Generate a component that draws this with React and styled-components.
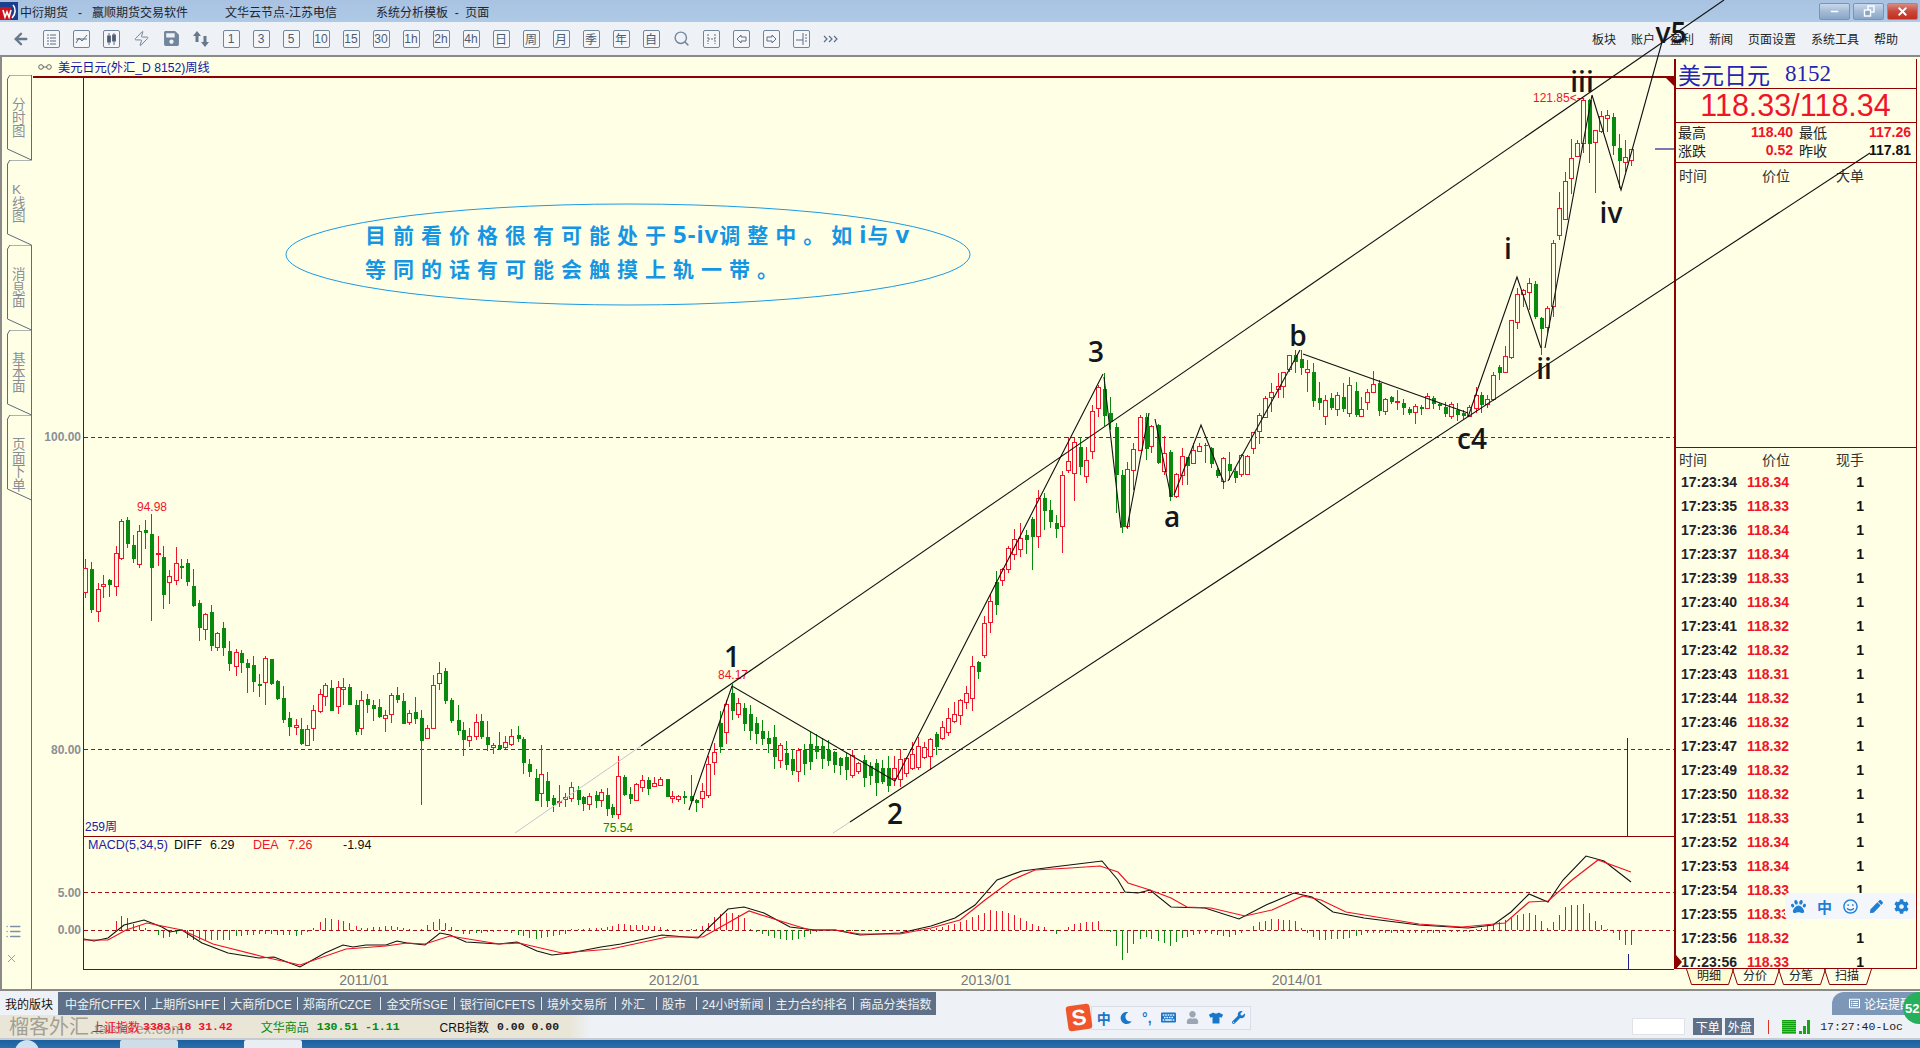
import React from "react";
import styled, { createGlobalStyle } from "styled-components";
import { ArrowLeft, Zap, Search, List, X, Minus } from "lucide-react";
import { FaPaw, FaRegSmile, FaPen, FaCog, FaMoon, FaKeyboard, FaUser, FaTshirt, FaWrench, FaSave, FaRegListAlt } from "react-icons/fa";

const CN = `"Liberation Sans", "Noto Sans CJK SC", sans-serif`;
const PAPER = "#ffffe6";
const FRAME = "#8f0000";
const RED = "#f0142a";
const GREEN = "#078a0e";
const SLATE = "#5f7188";

const GlobalStyle = createGlobalStyle`
  html, body { margin: 0; padding: 0; background: #eef1f5; }
  body { font-family: ${CN}; overflow: hidden; }
`;

const Page = styled.div`
  position: relative;
  display: flex;
  flex-direction: column;
  width: 1920px;
  height: 1048px;
  overflow: hidden;
  font-size: 12px;
  color: #222;
`;

/* ---------- title bar ---------- */
const TitleBar = styled.div`
  display: flex;
  align-items: center;
  height: 22px;
  background: linear-gradient(#a9c2e2, #aecae6);
`;
const TitleText = styled.span`
  margin-left: ${(p) => p.$gap}px;
  white-space: pre;
  font-size: 12px;
  color: #1e2530;
`;
const WindowButtons = styled.div`
  display: flex;
  gap: 3px;
  margin-left: auto;
  margin-right: 2px;
`;
const WindowButton = styled.div`
  display: flex;
  align-items: center;
  justify-content: center;
  width: 31px;
  height: 17px;
  border: 1px solid #7f93ab;
  border-radius: 2px;
  box-sizing: border-box;
  color: #fff;
  background: ${(p) => (p.$close ? "linear-gradient(#d98a80 0%, #c9483a 50%, #c42e1e 100%)" : "linear-gradient(#c8d8ea 0%, #a4bbd6 50%, #8aa6c6 100%)")};
`;

/* ---------- toolbar ---------- */
const Toolbar = styled.div`
  display: flex;
  align-items: center;
  height: 33px;
  padding-left: 6px;
  background: #eef1f5;
`;
const ToolCell = styled.div`
  display: flex;
  align-items: center;
  justify-content: center;
  width: 30px;
  color: #71859b;
`;
const ToolBox = styled.div`
  display: flex;
  align-items: center;
  justify-content: center;
  width: 17px;
  height: 18px;
  box-sizing: border-box;
  border: 1px solid #71859b;
  border-radius: 2px;
  background: #f4f6f9;
  font-size: ${(p) => (p.$small ? 11 : 12)}px;
  color: #4d5d6f;
`;
const Menu = styled.div`
  display: flex;
  gap: 15px;
  margin-left: auto;
  margin-right: 22px;
  font-size: 12px;
  color: #222;
`;
const Rule = styled.div`
  height: 2px;
  background: #8a8a8a;
`;

/* ---------- main area ---------- */
const Main = styled.div`
  display: flex;
  height: 932px;
  background: ${PAPER};
`;
const LeftRail = styled.div`
  position: relative;
  display: flex;
  flex-direction: column;
  box-sizing: border-box;
  width: 33px;
  padding-top: 18px;
  border-left: 2px solid #8a8a8a;
`;
const RailEdge = styled.div`
  flex: 1;
  margin-left: 29px;
  border-left: 1px solid #5d6b7a;
`;
const RailIcons = styled.div`
  position: absolute;
  left: 3px;
  top: 866px;
  display: flex;
  flex-direction: column;
  gap: 12px;
  color: #7d90a6;
`;
const SideTab = styled.div`
  position: relative;
  height: 85px;
  width: 31px;
`;
const SideTabShape = styled.svg`
  position: absolute;
  left: 0;
  top: 0;
`;
const SideTabText = styled.div`
  position: absolute;
  left: 10px;
  top: 23px;
  width: 14px;
  font-size: 13.5px;
  line-height: 13.5px;
  color: #8a8f96;
  word-break: break-all;
`;
const ChartColumn = styled.div`
  display: flex;
  flex-direction: column;
  width: 1641px;
`;
const ChartTitle = styled.div`
  display: flex;
  align-items: center;
  gap: 6px;
  height: 19px;
  padding-left: 5px;
  font-size: 12.2px;
  color: #1616a6;
`;
const ChartSvg = styled.svg`
  display: block;
`;
const AxisLabel = styled.text`
  font: bold 12px ${CN};
  fill: #8a8f96;
  text-anchor: end;
`;
const DateLabel = styled.text`
  font: 14px ${CN};
  fill: #77797d;
  text-anchor: middle;
`;
const PriceNote = styled.text`
  font: 12px ${CN};
  fill: ${(p) => p.$color};
`;
const IndicatorText = styled.text`
  font: 12.5px ${CN};
  fill: ${(p) => p.$color};
`;

/* ---------- quote panel ---------- */
const Panel = styled.div`
  position: relative;
  display: flex;
  flex-direction: column;
  width: 243px;
  padding-top: 2px;
`;
const PanelBox = styled.div`
  display: flex;
  flex-direction: column;
  height: 910px;
  box-sizing: border-box;
  border-left: 2px solid ${FRAME};
  border-right: 1px solid ${FRAME};
  border-bottom: 1px solid ${FRAME};
  overflow: hidden;
`;
const NameRow = styled.div`
  display: flex;
  align-items: center;
  height: 30px;
  flex: none;
  padding-left: 2px;
  box-sizing: border-box;
  border-bottom: 1px solid ${FRAME};
  color: #2424b4;
  font-size: 23px;
`;
const NameCode = styled.span`
  margin-left: 15px;
  font-family: "Liberation Serif", serif;
  font-size: 23px;
`;
const PriceRow = styled.div`
  display: flex;
  align-items: center;
  justify-content: center;
  height: 34px;
  flex: none;
  box-sizing: border-box;
  border-bottom: 1px solid ${FRAME};
  color: ${RED};
  font-size: 30.5px;
  padding-right: 1px;
`;
const StatsGrid = styled.div`
  display: grid;
  grid-template-columns: 115px 112px;
  column-gap: 6px;
  align-content: center;
  height: 40px;
  flex: none;
  padding: 0 0 3px 2px;
  box-sizing: border-box;
  border-bottom: 1px solid ${FRAME};
`;
const Stat = styled.div`
  display: flex;
  justify-content: space-between;
  align-items: center;
  height: 18px;
  font-size: 14px;
`;
const StatValue = styled.b`
  color: ${(p) => (p.$black ? "#111" : RED)};
  font-size: 14px;
`;
const OrderSection = styled.div`
  height: 285px;
  flex: none;
  box-sizing: border-box;
  border-bottom: 1px solid ${FRAME};
`;
const ColumnHead = styled.div`
  display: grid;
  grid-template-columns: 83px 74px 60px;
  flex: none;
  height: ${(p) => p.$h}px;
  align-items: center;
  padding-left: 3px;
  font-size: 14px;
  color: #333;
`;
const TradeRow = styled.div`
  display: grid;
  grid-template-columns: 66px 68px 49px;
  align-items: center;
  flex: none;
  height: 24px;
  padding-left: 5px;
  font-size: 14px;
  line-height: 14px;
  font-weight: bold;
  color: #22232a;
`;
const TradePrice = styled.span`
  color: ${RED};
`;
const TradeQty = styled.span`
  text-align: right;
  color: #111;
`;
const PanelMarker = styled.div`
  position: absolute;
  left: 2px;
  top: 898px;
  width: 0;
  height: 0;
  border-top: 7px solid transparent;
  border-bottom: 7px solid transparent;
  border-left: 6px solid ${FRAME};
`;
const PanelTabs = styled.div`
  display: flex;
  padding-left: 12px;
`;
const PanelTab = styled.div`
  position: relative;
  width: 46px;
  height: 16px;
  text-align: center;
  font-size: 12px;
  line-height: 15px;
  color: #222;
`;
const PanelTabShape = styled.svg`
  position: absolute;
  left: 0;
  top: 0;
`;
const PanelTabText = styled.span`
  position: relative;
`;

/* ---------- bottom bars ---------- */
const TabBar = styled.div`
  display: flex;
  margin-top: 1px;
  height: 23px;
  background: #eef1f5;
`;
const MyBlocks = styled.div`
  display: flex;
  align-items: center;
  width: 58px;
  padding-left: 5px;
  box-sizing: border-box;
  font-size: 12px;
  color: #111;
`;
const BlockTabs = styled.div`
  display: flex;
  align-items: center;
  width: 878px;
  padding-left: 7px;
  box-sizing: border-box;
  background: ${SLATE};
  color: #edf1f5;
  font-size: 12px;
  white-space: nowrap;
`;
const BlockSep = styled.span`
  width: 1px;
  height: 13px;
  margin: 0 5px 0 ${(p) => 5 + p.$extra}px;
  background: #e6ebf1;
`;
const StatusBar = styled.div`
  position: relative;
  display: flex;
  align-items: center;
  height: 23px;
  background: linear-gradient(90deg, #e9e6d8 0, #e9e6d8 570px, #eef1f5 590px);
  font-size: 12px;
  border-bottom: 2px solid #c8ccd0;
  box-sizing: content-box;
`;
const Ticker = styled.span`
  position: relative;
  margin-left: ${(p) => p.$gap}px;
  color: ${(p) => p.$color};
  font-family: "Liberation Mono", "Noto Sans CJK SC", monospace;
  font-size: 11.5px;
  font-weight: ${(p) => (p.$bold ? "bold" : "normal")};
  white-space: pre;
`;
const TickerName = styled.span`
  position: relative;
  margin-left: ${(p) => p.$gap}px;
  color: ${(p) => p.$color};
  font-size: 12px;
`;
const Watermark = styled.div`
  position: absolute;
  left: 9px;
  top: -1px;
  color: #6a665c;
  opacity: 0.55;
  font-size: 20px;
  line-height: 26px;
  white-space: nowrap;
`;
const WatermarkSmall = styled.span`
  font-size: 15px;
`;
const StatusRight = styled.div`
  display: flex;
  align-items: center;
  margin-left: auto;
  padding-right: 17px;
`;
const QtyInput = styled.div`
  width: 53px;
  height: 17px;
  background: #fff;
  border: 1px solid #dfe3e8;
  box-sizing: border-box;
`;
const OrderButton = styled.div`
  display: flex;
  align-items: center;
  justify-content: center;
  width: 29px;
  height: 17px;
  margin-left: ${(p) => p.$gap}px;
  background: ${SLATE};
  color: #fff;
  font-size: 12px;
`;
const RedTick = styled.span`
  width: 1px;
  height: 14px;
  margin-left: 14px;
  background: #e03020;
`;
const LevelBlock = styled.span`
  width: 14px;
  height: 14px;
  margin-left: 13px;
  background: repeating-linear-gradient(#10a010 0 1px, #30e030 1px 2px);
`;
const SignalBars = styled.span`
  display: flex;
  align-items: flex-end;
  gap: 1px;
  height: 14px;
  margin-left: 3px;
`;
const SignalBar = styled.i`
  width: 3px;
  height: ${(p) => p.$h}px;
  background: #17a517;
`;
const Clock = styled.span`
  margin-left: 10px;
  font-family: "Liberation Mono", monospace;
  font-size: 11.5px;
  white-space: nowrap;
`;
const Taskbar = styled.div`
  display: flex;
  height: 8px;
  background: linear-gradient(#1c5f9c, #2a6fae);
  overflow: hidden;
`;
const TaskOrb = styled.span`
  width: 24px;
  height: 24px;
  margin-left: 15px;
  border-radius: 50%;
  background: #cfe0ee;
`;
const TaskTile = styled.span`
  width: ${(p) => p.$w}px;
  height: 10px;
  margin-left: ${(p) => p.$gap}px;
  border-radius: 2px 2px 0 0;
  background: ${(p) => p.$bg};
`;

/* ---------- floating things ---------- */
const Overlay = styled.svg`
  position: absolute;
  left: 0;
  top: 0;
  z-index: 5;
  pointer-events: none;
`;
const WaveLabel = styled.text`
  font: 600 28px "Open Sans", sans-serif;
  fill: #14161c;
  text-anchor: middle;
`;
const NoteText = styled.text`
  font: bold 21px "Noto Sans CJK SC", sans-serif;
  letter-spacing: 7px;
  fill: #1596e2;
`;
const NoteLatin = styled.tspan`
  font: bold 24px "Noto Sans", sans-serif;
  letter-spacing: 1px;
`;
const InputWidget = styled.div`
  position: absolute;
  left: 1785px;
  top: 893px;
  z-index: 6;
  display: flex;
  align-items: center;
  justify-content: space-around;
  width: 130px;
  height: 26px;
  border-radius: 3px;
  background: #f3f6fb;
  color: #1f7fd4;
  font-size: 15px;
  font-weight: bold;
`;
const SogouBar = styled.div`
  position: absolute;
  left: 1067px;
  top: 1005px;
  z-index: 6;
  display: flex;
  align-items: center;
`;
const SogouLogo = styled.div`
  display: flex;
  align-items: center;
  justify-content: center;
  width: 24px;
  height: 25px;
  border-radius: 3px;
  background: #f0562a;
  color: #fff;
  font: bold 22px ${CN};
  transform: rotate(-8deg);
`;
const SogouItems = styled.div`
  display: flex;
  align-items: center;
  justify-content: space-around;
  width: 158px;
  height: 22px;
  background: #f0f4fa;
  border: 1px solid #d8dfe8;
  color: #1a76c8;
  font-size: 14px;
  font-weight: bold;
`;
const ForumTab = styled.div`
  position: absolute;
  left: 1832px;
  top: 992px;
  z-index: 4;
  display: flex;
  align-items: center;
  gap: 4px;
  width: 88px;
  height: 23px;
  padding-left: 17px;
  box-sizing: border-box;
  color: #fff;
  font-size: 12px;
  white-space: nowrap;
  overflow: hidden;
  background: #7d97b8;
  border-radius: 12px 0 0 0;
`;
const OnlineBadge = styled.div`
  position: absolute;
  left: 1903px;
  top: 992px;
  z-index: 6;
  width: 32px;
  height: 32px;
  border-radius: 50%;
  background: #27b05c;
  color: #fff;
  font-size: 13px;
  font-weight: bold;
  line-height: 34px;
  padding-left: 2px;
  box-sizing: border-box;
`;

/* ---------- chart data ---------- */
const rowsA = [
  [62,1,178,205,278,294],[77,0,186,207,330,338],[92,1,250,268,335,365],[106,1,225,252,258,295],[121,0,238,240,255,290],[136,1,138,160,260,288],[150,1,58,63,176,180],[165,0,52,60,132,145],[180,0,104,135,178,190],[194,1,76,94,192,204],
  [209,0,60,90,98,146],[224,0,42,102,204,362],[239,1,108,159,164,198],[253,0,138,171,284,326],[268,1,210,228,248,312],[283,1,142,190,240,255],[297,0,178,198,203,238],[312,0,178,189,246,258],[327,0,208,258,318,320],[341,0,300,309,384,422],
  [356,1,338,342,387,420],[371,0,316,336,438,452],[385,1,395,400,443,452],[400,0,366,384,444,468],[415,0,424,453,492,512],[430,1,448,457,500,527],[444,0,450,459,489,520],[459,0,478,488,504,578],[474,0,468,495,546,575],[488,0,522,552,557,590],
  [503,1,468,474,546,614],[518,0,476,477,552,556],[532,0,540,544,596,600],[547,0,558,594,660,668],[562,0,636,654,681,708],[577,1,658,676,682,706],[591,0,654,687,733,736],[606,1,674,687,736,738],[621,1,616,630,686,722],[636,1,568,582,634,638],
  [650,1,550,556,588,618],[665,0,540,565,632,634],[680,1,544,561,620,642],[694,1,534,562,567,616],[709,0,552,561,614,616],[724,0,600,615,695,705],[738,1,573,600,686,705],[753,0,582,598,615,640],[768,0,600,615,627,662],[782,0,598,622,652,655],
  [797,1,630,645,656,695],[812,1,578,586,644,668],[826,0,562,586,599,608],[841,0,578,603,671,672],[856,1,630,640,668,676],[870,0,590,636,658,672],[885,0,630,655,722,914],[900,1,674,684,714,718],[915,1,525,556,684,686],[929,1,486,520,551,570],
  [944,0,504,513,604,612],[959,0,595,601,662,668],[974,0,615,660,692,706],[988,0,666,690,720,768],[1003,1,684,709,722,741],[1018,1,642,666,710,720],[1032,0,642,662,712,716],[1047,0,664,712,736,752],[1062,1,728,736,741,762],[1076,0,696,735,748,750],
  [1091,1,708,726,743,748],[1106,1,688,709,734,738],[1121,0,678,705,718,726],[1135,0,712,718,788,822],[1150,0,778,792,816,830],[1165,0,808,834,902,903],[1179,1,735,823,880,920],[1194,0,815,844,902,920],[1209,0,885,895,916,935],[1223,1,855,904,906,922],
  [1238,1,878,893,897,920],[1253,1,846,862,896,905],[1268,0,858,870,900,914],[1282,0,888,890,912,932],[1297,1,878,888,914,930],[1312,0,874,885,902,924],[1326,1,868,878,902,920],[1341,0,864,886,926,948],[1353,0,912,921,945,953],[1368,1,768,828,944,956],
  [1383,0,826,832,885,888],[1397,0,862,882,897,911],[1412,1,848,852,900,903],[1427,1,826,842,861,875],[1441,0,832,841,866,885],[1456,1,830,850,858,862],[1471,1,830,838,855,858],[1486,0,838,838,890,892],[1500,1,874,888,896,908],[1515,1,884,888,898,907],
  [1530,0,872,889,893,912],[1545,0,826,888,902,905],[1559,0,898,900,908,936],
];
const rowsB = [
  [362,1,648,655,718,730],[378,1,598,628,672,690],[392,1,578,625,658,682],[407,0,600,615,630,672],[422,0,560,567,620,720],[437,1,480,505,620,655],[451,0,490,503,543,600],[466,0,510,540,575,595],[481,0,555,578,596,625],[495,1,422,436,590,668],
  [510,1,320,393,422,430],[525,1,320,336,430,512],[540,0,320,350,410,435],[554,1,350,392,440,458],[569,1,225,243,365,388],[584,1,165,172,234,262],[598,0,130,178,258,288],[613,0,200,248,275,300],[628,0,280,292,435,550],[641,0,420,435,590,610],
  [655,1,395,418,590,596],[670,1,340,358,420,480],[685,1,255,262,360,360],[700,0,248,262,358,390],[714,1,285,290,350,368],[729,0,282,286,400,402],[744,1,318,370,425,435],[759,0,360,367,500,514],[773,1,430,433,498,505],[788,1,355,380,437,465],
  [802,0,380,382,407,465],[817,1,340,362,400,402],[831,1,340,348,363,367],[846,0,338,344,346,400],[860,0,352,353,402,415],[875,0,415,420,437,445],[890,1,382,386,455,478],[905,0,365,403,424,450],[919,0,415,424,443,460],[934,1,372,375,432,440],
  [949,1,375,380,432,435],[964,1,305,308,355,372],[978,1,250,256,305,342],[993,1,198,206,262,265],[1008,1,160,186,202,245],[1023,1,130,170,177,205],[1037,1,125,128,170,205],[1052,1,75,76,118,125],[1066,0,60,75,95,130],[1081,0,60,88,113,135],
  [1096,1,90,118,128,186],[1111,0,100,127,212,230],[1125,0,155,205,218,240],[1140,1,196,212,258,284],[1155,0,190,205,234,240],[1169,1,185,196,238,258],[1184,0,160,202,238,245],[1199,1,142,166,250,262],[1214,0,157,183,255,262],[1228,1,200,238,260,262],
  [1243,1,178,187,218,240],[1258,1,124,163,187,190],[1272,0,150,160,242,258],[1287,1,205,208,245,255],[1302,0,198,202,215,222],[1316,1,180,214,217,240],[1331,0,208,220,235,255],[1346,0,232,236,248,255],[1360,1,222,230,248,282],[1375,0,226,232,237,255],
  [1390,1,188,200,234,238],[1404,0,198,204,222,238],[1419,0,218,222,227,240],[1433,0,216,230,252,262],[1448,1,215,224,258,266],[1463,0,218,240,256,272],[1478,0,240,248,258,270],[1493,1,225,232,258,262],[1508,1,172,196,236,248],[1522,0,185,195,225,248],
  [1537,1,195,207,222,234],[1552,1,125,135,207,212],[1566,0,105,112,130,150],
];
const rowsC = [
  [136,1,858,888,938,940],[154,1,780,782,892,897],[172,1,685,703,788,808],[190,1,686,692,703,740],[208,1,655,670,698,750],[226,0,663,672,772,776],[244,0,770,775,806,884],[262,1,737,745,802,818],[280,1,540,550,738,772],[298,1,397,445,525,540],
  [316,1,337,364,477,480],[334,1,237,295,355,403],[352,1,240,250,290,290],[370,1,115,120,250,280],[388,0,118,120,252,310],[406,1,210,210,247,398],[424,1,152,170,215,220],[442,1,150,166,176,215],[460,0,160,170,257,285],[478,0,222,265,302,385],
  [496,1,240,293,307,335],[514,1,266,268,300,318],
];
const place = (rows, x0, kx, y0) =>
  rows.map(([x, up, h, t, b, l]) => ({ x: Math.round(x0 + x / kx), up, h: y0 + h / 3, t: y0 + t / 3, b: y0 + b / 3, l: y0 + l / 3 }));

const lerp = (pts, x) => {
  if (x <= pts[0][0]) return pts[0][1];
  for (let i = 1; i < pts.length; i++) {
    if (x <= pts[i][0]) {
      const [x0, y0] = pts[i - 1];
      const [x1, y1] = pts[i];
      return y0 + ((y1 - y0) * (x - x0)) / (x1 - x0);
    }
  }
  return pts[pts.length - 1][1];
};

// middle stretch, walked along the wave 1-2 and start of 3
const midPath = [[103,795],[104,780],[106,735],[108,702],[110,716],[114,741],[118,765],[122,749],[126,762],[130,769],[134,777],[137,766],[141,748],[145,718],[147,698],[149,667],[151,612],[153,575]];
let seed = 4711;
const rnd = () => {
  seed = (seed * 16807) % 2147483647;
  return seed / 2147483647;
};
const walked = [];
for (let i = 103; i <= 153; i++) {
  const mid = lerp(midPath, i);
  const rising = i < 108 || i > 134;
  const half = 3 + rnd() * (i > 145 || i < 108 ? 14 : 8);
  const t = mid - half;
  const b = mid + half;
  walked.push({
    x: Math.round(85.3 + 5.99 * i),
    up: rnd() < (rising ? 0.8 : 0.3) ? 1 : 0,
    h: i === 108 ? 684 : t - 1 - rnd() * 12,
    t,
    b,
    l: b + 1 + rnd() * 12,
  });
}
const candles = [...place(rowsA, 60, 2.45, 500), ...walked, ...place(rowsB, 860, 2.45, 330), ...place(rowsC, 1460, 3, 60)];

const macdBlack = [[84,939],[94,941],[108,938],[124,925],[144,920],[162,927],[170,932],[182,930],[202,943],[228,953],[259,958],[274,957],[300,967],[325,953],[343,945],[353,947],[366,945],[386,945],[397,941],[407,943],[425,945],[440,933],[450,935],[466,942],[499,944],[517,942],[537,951],[552,955],[570,953],[601,947],[621,944],[662,935],[698,938],[728,909],[744,907],[764,913],[790,927],[815,930],[835,930],[860,935],[900,933],[931,926],[955,918],[975,905],[997,880],[1022,871],[1053,867],[1102,861],[1118,880],[1125,892],[1138,893],[1150,890],[1171,907],[1205,908],[1239,919],[1266,905],[1294,893],[1312,897],[1333,912],[1364,918],[1419,925],[1468,928],[1493,925],[1511,912],[1529,894],[1548,902],[1563,880],[1586,856],[1604,861],[1631,882]];
const macdRed = [[84,940],[108,940],[126,930],[147,923],[162,926],[182,930],[213,944],[264,957],[300,965],[346,949],[386,946],[407,943],[425,944],[450,936],[499,944],[519,943],[562,953],[611,949],[667,937],[703,937],[749,911],[790,924],[810,930],[835,930],[860,934],[900,934],[931,928],[960,920],[985,900],[1012,880],[1035,870],[1070,868],[1100,866],[1118,872],[1128,883],[1150,890],[1171,898],[1187,907],[1211,908],[1245,916],[1272,910],[1303,896],[1321,900],[1346,912],[1419,924],[1462,927],[1505,923],[1529,902],[1548,901],[1572,880],[1598,860],[1631,872]];
const histPts = [[110,0],[116,9],[122,15],[128,12],[134,5],[142,3],[152,0],[162,-8],[170,-7],[182,0],[188,-10],[228,-10],[236,-6],[259,-4],[284,-5],[300,-6],[310,0],[320,8],[325,12],[346,8],[361,2],[392,4],[417,-1],[432,8],[440,11],[448,5],[463,-4],[504,-1],[534,-9],[565,-4],[570,1],[601,2],[619,6],[657,4],[672,0],[698,1],[709,8],[716,15],[723,17],[733,17],[744,12],[749,2],[756,-2],[774,-8],[790,-10],[800,-9],[813,-2],[825,0],[860,-1],[900,0],[930,1],[945,4],[960,8],[991,20],[1006,18],[1021,12],[1033,5],[1044,3],[1056,-4],[1068,3],[1075,7],[1098,9],[1101,0],[1110,-2],[1122,-30],[1133,-14],[1144,-6],[1171,-16],[1180,-8],[1205,-3],[1229,-7],[1248,0],[1257,7],[1272,11],[1294,10],[1303,0],[1318,-10],[1343,-9],[1367,-3],[1419,-3],[1468,-2],[1480,2],[1505,10],[1517,15],[1529,17],[1539,13],[1545,0],[1554,9],[1566,24],[1583,26],[1595,9],[1609,0],[1615,-5],[1623,-15],[1632,-15]];

const toPoints = (pts) => pts.map((p) => p.join(",")).join(" ");

const waveLines = [
  [[689,810],[732,686],[895,781],[1103,374]],
  [[1104,377],[1121,528]],
  [[1127,528],[1149,413]],
  [[1155,419],[1171,497]],
  [[1174,495],[1201,425],[1224,483]],
  [[1228,481],[1300,350]],
  [[1303,354],[1468,413]],
  [[1468,417],[1517,277],[1541,348]],
  [[1545,348],[1592,95],[1621,190],[1662,42]],
];
const waveLabels = [
  ["1",732,667],["2",895,824],["3",1096,362],["a",1172,527],["b",1298,346],["c4",1472,449],
  ["i",1508,259],["ii",1544,379],["iii",1582,92],["iv",1611,223],["v5",1671,43],
];

const sideTabs = ["分时图", "K线图", "消息面", "基本面", "页面下单"];
const stepButtons = ["1","3","5","10","15","30","1h","2h","4h","日","周","月","季","年","自"];
// second value: extra space in front of the separator
const blocks = [["中金所CFFEX",0],["上期所SHFE",0],["大商所DCE",0],["郑商所CZCE",0],["金交所SGE",4],["银行间CFETS",1],["境外交易所",1],["外汇",3],["股市",6],["24小时新闻",5],["主力合约排名",1],["商品分类指数",1]];
const trades = [["34","34"],["35","33"],["36","34"],["37","34"],["39","33"],["40","34"],["41","32"],["42","32"],["43","31"],["44","32"],["46","32"],["47","32"],["49","32"],["50","32"],["51","33"],["52","34"],["53","34"],["54","33"],["55","33"],["56","32"],["56","33"]];

function BoxGlyph({ children }) {
  return (
    <svg width="13" height="14" viewBox="0 0 13 14" fill="none" stroke="#5d6f83" strokeWidth="1">
      {children}
    </svg>
  );
}

function Toolstrip() {
  return (
    <Toolbar>
      <ToolCell><ArrowLeft size={18} strokeWidth={3.2} color="#66788c" /></ToolCell>
      <ToolCell>
        <ToolBox>
          <BoxGlyph><path d="M2 3h2M5 3h6M2 6h2M5 6h6M2 9h2M5 9h6M2 12h2M5 12h6" /></BoxGlyph>
        </ToolBox>
      </ToolCell>
      <ToolCell>
        <ToolBox>
          <BoxGlyph><path d="M1 11l3-5 3 3 5-6M1 7h11" /></BoxGlyph>
        </ToolBox>
      </ToolCell>
      <ToolCell>
        <ToolBox>
          <BoxGlyph><path d="M4 1v12M9 1v12" /><rect x="2.5" y="4" width="3" height="6" fill="#4d5d6f" /><rect x="7.5" y="3" width="3" height="6" fill="#4d5d6f" /></BoxGlyph>
        </ToolBox>
      </ToolCell>
      <ToolCell><Zap size={17} strokeWidth={1.4} /></ToolCell>
      <ToolCell><FaSave size={17} /></ToolCell>
      <ToolCell>
        <svg width="18" height="18" viewBox="0 0 18 18" fill="#66788c">
          <path d="M5 1l4 5H6.500v6h-3V6H1zM13 17l-4-5h2.500V6h3v6H17z" />
        </svg>
      </ToolCell>
      {stepButtons.map((t) => (
        <ToolCell key={t}><ToolBox>{t}</ToolBox></ToolCell>
      ))}
      <ToolCell><Search size={17} strokeWidth={2} /></ToolCell>
      <ToolCell><ToolBox><BoxGlyph><path d="M3 2v10M10 2v10M3 7h7" strokeDasharray="2 1" /></BoxGlyph></ToolBox></ToolCell>
      <ToolCell><ToolBox><BoxGlyph><path d="M11 5H6V3L2 7l4 4V9h5z" /></BoxGlyph></ToolBox></ToolCell>
      <ToolCell><ToolBox><BoxGlyph><path d="M2 5h5V3l4 4-4 4V9H2z" /></BoxGlyph></ToolBox></ToolCell>
      <ToolCell><ToolBox><BoxGlyph><path d="M1 8h7M8 1v12M10 3h2M10 6h2M10 9h2" /></BoxGlyph></ToolBox></ToolCell>
      <ToolCell>
        <svg width="16" height="10" viewBox="0 0 16 10" fill="none" stroke="#5d6f83" strokeWidth="1.2">
          <path d="M1 2l3 3-3 3M6 2l3 3-3 3M11 2l3 3-3 3" />
        </svg>
      </ToolCell>
      <Menu>
        <span>板块</span><span>账户</span><span>盈利</span><span>新闻</span><span>页面设置</span><span>系统工具</span><span>帮助</span>
      </Menu>
    </Toolbar>
  );
}

function SideTabs() {
  return (
    <LeftRail>
      {sideTabs.map((t, i) => (
        <SideTab key={t}>
          <SideTabShape width="31" height="86" fill="none" stroke="#5d6b7a" strokeWidth="1">
            <path d={i === 1 ? "M29.500 0H8L5.500 4V74L29.500 85" : "M5.500 74V4L8 0H29.500V85L5.500 74"} />
          </SideTabShape>
          <SideTabText>{t}</SideTabText>
        </SideTab>
      ))}
      <RailEdge />
      <RailIcons>
        <List size={17} strokeWidth={2} />
        <X size={13} strokeWidth={1.6} />
      </RailIcons>
    </LeftRail>
  );
}

function Chart() {
  return (
    <ChartSvg width="1641" height="913" viewBox="33 76 1641 913">
      <g stroke={FRAME} strokeWidth="1" shapeRendering="crispEdges">
        <line x1="33" y1="76.5" x2="1674" y2="76.5" strokeWidth="2" />
        <line x1="83.5" y1="76" x2="83.5" y2="969" />
        <line x1="83" y1="836.5" x2="1674" y2="836.5" />
        <line x1="83" y1="969.5" x2="1674" y2="969.5" />
        <g strokeDasharray="4 3" stroke="#a01010">
          <line x1="84" y1="437.5" x2="1674" y2="437.5" />
          <line x1="84" y1="749.5" x2="1674" y2="749.5" />
          <line x1="84" y1="892.5" x2="1674" y2="892.5" />
          <line x1="84" y1="930.5" x2="1674" y2="930.5" />
        </g>
      </g>
      <AxisLabel x="81" y="441">100.00</AxisLabel>
      <AxisLabel x="81" y="754">80.00</AxisLabel>
      <AxisLabel x="81" y="897">5.00</AxisLabel>
      <AxisLabel x="81" y="934">0.00</AxisLabel>

      <g shapeRendering="crispEdges">
        {candles.map((c, i) => {
          const color = c.up ? RED : GREEN;
          return (
            <g key={i}>
              <line x1={c.x + 0.5} x2={c.x + 0.5} y1={c.h} y2={Math.min(c.l, 835)} stroke={color} />
              {c.up ? (
                <rect x={c.x - 1.5} y={c.t} width="4" height={Math.max(c.b - c.t, 1)} fill={PAPER} stroke={color} />
              ) : (
                <rect x={c.x - 1.5} y={c.t} width="4" height={Math.max(c.b - c.t, 1)} fill={color} />
              )}
            </g>
          );
        })}
        <line x1="1627.500" x2="1627.500" y1="738" y2="836" stroke="#20208c" />
        <line x1="1628.500" x2="1628.500" y1="954" y2="969" stroke="#20208c" />
      </g>
      <PriceNote x="137" y="511" $color={RED}>94.98</PriceNote>
      <PriceNote x="718" y="679" $color={RED}>84.17</PriceNote>
      <PriceNote x="603" y="832" $color={GREEN}>75.54</PriceNote>
      <PriceNote x="1533" y="102" $color={RED}>121.85&lt;--</PriceNote>
      <PriceNote x="85" y="831" $color="#2020a8">259周</PriceNote>

      <IndicatorText x="88" y="849" $color="#2020a8">MACD(5,34,5)</IndicatorText>
      <IndicatorText x="174" y="849" $color="#111">DIFF</IndicatorText>
      <IndicatorText x="210" y="849" $color="#111">6.29</IndicatorText>
      <IndicatorText x="253" y="849" $color={RED}>DEA</IndicatorText>
      <IndicatorText x="288" y="849" $color={RED}>7.26</IndicatorText>
      <IndicatorText x="343" y="849" $color="#111">-1.94</IndicatorText>

      <g shapeRendering="crispEdges">
        {candles.map((c, i) => {
          const h = lerp(histPts, c.x);
          if (Math.abs(h) < 0.6) return null;
          return <line key={i} x1={c.x + 0.5} x2={c.x + 0.5} y1="930" y2={930 - h} stroke={h > 0 ? RED : GREEN} />;
        })}
      </g>
      <polyline points={toPoints(macdBlack)} fill="none" stroke="#111" strokeWidth="1.1" />
      <polyline points={toPoints(macdRed)} fill="none" stroke="#f01020" strokeWidth="1.2" />

      {[["2011/01",364],["2012/01",674],["2013/01",986],["2014/01",1297]].map(([t, x]) => (
        <DateLabel key={t} x={x} y="985">{t}</DateLabel>
      ))}
    </ChartSvg>
  );
}

function QuotePanel() {
  return (
    <Panel>
      <PanelBox>
        <NameRow>美元日元<NameCode>8152</NameCode></NameRow>
        <PriceRow>118.33/118.34</PriceRow>
        <StatsGrid>
          <Stat>最高<StatValue>118.40</StatValue></Stat>
          <Stat>最低<StatValue>117.26</StatValue></Stat>
          <Stat>涨跌<StatValue>0.52</StatValue></Stat>
          <Stat>昨收<StatValue $black>117.81</StatValue></Stat>
        </StatsGrid>
        <OrderSection>
          <ColumnHead $h={24}><span>时间</span><span>价位</span><span>大单</span></ColumnHead>
        </OrderSection>
        <ColumnHead $h={22}><span>时间</span><span>价位</span><span>现手</span></ColumnHead>
        {trades.map(([s, p], i) => (
          <TradeRow key={i}>
            <span>17:23:{s}</span>
            <TradePrice>118.{p}</TradePrice>
            <TradeQty>1</TradeQty>
          </TradeRow>
        ))}
      </PanelBox>
      <PanelMarker />
      <PanelTabs>
        {["明细", "分价", "分笔", "扫描"].map((t, i) => (
          <PanelTab key={t}>
            <PanelTabShape width="48" height="17" fill={i === 0 ? "#fffbd0" : "none"} stroke={FRAME} strokeWidth="1">
              <path d="M0.500 0L5.500 15.500H42.500L47.500 0" />
            </PanelTabShape>
            <PanelTabText>{t}</PanelTabText>
          </PanelTab>
        ))}
      </PanelTabs>
    </Panel>
  );
}

function WaveOverlay() {
  return (
    <Overlay width="1920" height="1048" viewBox="0 0 1920 1048">
      <polygon points="1665,77 1674,77 1674,86" fill={FRAME} />
      <line x1="1655" y1="149" x2="1674" y2="149" stroke="#20208c" strokeWidth="1.2" />

      <line x1="515" y1="833" x2="641" y2="746" stroke="#c4c4d0" strokeWidth="1" />
      <line x1="641" y1="746" x2="1724" y2="0" stroke="#111" strokeWidth="1.1" />
      <line x1="833" y1="833" x2="850" y2="822" stroke="#c4c4d0" strokeWidth="1" />
      <line x1="850" y1="822" x2="1870" y2="153" stroke="#111" strokeWidth="1.1" />
      {waveLines.map((pts, i) => (
        <polyline key={i} points={toPoints(pts)} fill="none" stroke="#111" strokeWidth="1.1" />
      ))}
      {waveLabels.map(([t, x, y]) => (
        <WaveLabel key={t} x={x} y={y}>{t}</WaveLabel>
      ))}

      <ellipse cx="628" cy="254.500" rx="342" ry="50.500" fill="none" stroke="#1a9ae2" strokeWidth="1" />
      <NoteText x="365" y="243">
        目前看价格很有可能处于<NoteLatin>5-iv</NoteLatin>调整中。如<NoteLatin>i</NoteLatin>与<NoteLatin>v</NoteLatin>
      </NoteText>
      <NoteText x="365" y="277">等同的话有可能会触摸上轨一带。</NoteText>
    </Overlay>
  );
}

export default function App() {
  return (
    <Page>
      <GlobalStyle />
      <TitleBar>
        <svg width="18" height="18" viewBox="0 0 18 18">
          <rect width="18" height="18" fill="#1b3f8f" />
          <rect y="5" width="11" height="13" fill="#c8141e" />
          <path d="M3 8l2 7 2-5 2 5 2-7" fill="none" stroke="#fff" strokeWidth="1.6" />
          <path d="M13 3c3 3 3 9-1 13" fill="none" stroke="#fff" strokeWidth="1.6" />
        </svg>
        <TitleText $gap={2}>中衍期货   -   赢顺期货交易软件</TitleText>
        <TitleText $gap={37}>文华云节点-江苏电信</TitleText>
        <TitleText $gap={39}>系统分析模板  -  页面</TitleText>
        <WindowButtons>
          <WindowButton><Minus size={11} strokeWidth={3} /></WindowButton>
          <WindowButton>
            <svg width="12" height="12" viewBox="0 0 12 12" fill="none" stroke="#fff" strokeWidth="1.4">
              <rect x="5" y="1" width="6" height="6" />
              <rect x="1.500" y="5" width="6" height="6" fill="#8aa6c6" />
            </svg>
          </WindowButton>
          <WindowButton $close><X size={13} strokeWidth={3.4} /></WindowButton>
        </WindowButtons>
      </TitleBar>
      <Toolstrip />
      <Rule />
      <Main>
        <SideTabs />
        <ChartColumn>
          <ChartTitle>
            <svg width="14" height="6" viewBox="0 0 14 6" fill="none" stroke="#666" strokeWidth="1">
              <circle cx="3" cy="3" r="2.300" />
              <circle cx="11" cy="3" r="2.300" />
              <path d="M5 3h4" />
            </svg>
            美元日元(外汇_D 8152)周线
          </ChartTitle>
          <Chart />
        </ChartColumn>
        <QuotePanel />
      </Main>
      <Rule />
      <TabBar>
        <MyBlocks>我的版块</MyBlocks>
        <BlockTabs>
          {blocks.map(([b, extra], i) => (
            <React.Fragment key={b}>
              {i > 0 && <BlockSep $extra={extra} />}
              {b}
            </React.Fragment>
          ))}
        </BlockTabs>
      </TabBar>
      <StatusBar>
        <Watermark>榴客外汇.<WatermarkSmall>talkforex.com</WatermarkSmall></Watermark>
        <TickerName $gap={92} $color={RED}>上证指数</TickerName>
        <Ticker $gap={3} $color={RED} $bold>3383.18 31.42</Ticker>
        <TickerName $gap={28} $color={GREEN}>文华商品</TickerName>
        <Ticker $gap={8} $color={GREEN} $bold>130.51 -1.11</Ticker>
        <TickerName $gap={40} $color="#111">CRB指数</TickerName>
        <Ticker $gap={8} $color="#222" $bold>0.00 0.00</Ticker>
        <StatusRight>
          <QtyInput />
          <OrderButton $gap={8}>下单</OrderButton>
          <OrderButton $gap={3}>外盘</OrderButton>
          <RedTick />
          <LevelBlock />
          <SignalBars>
            <SignalBar $h={3} />
            <SignalBar $h={8} />
            <SignalBar $h={14} />
          </SignalBars>
          <Clock>17:27:40-Loc</Clock>
        </StatusRight>
      </StatusBar>
      <Taskbar>
        <TaskOrb />
        <TaskTile $w={58} $gap={81} $bg="#cfdde8" />
        <TaskTile $w={58} $gap={66} $bg="#e8eef4" />
      </Taskbar>

      <WaveOverlay />
      <InputWidget>
        <FaPaw size={15} />
        <span>中</span>
        <FaRegSmile size={15} />
        <FaPen size={13} />
        <FaCog size={15} />
      </InputWidget>
      <SogouBar>
        <SogouLogo>S</SogouLogo>
        <SogouItems>
          <span>中</span>
          <FaMoon size={12} />
          <span>°,</span>
          <FaKeyboard size={15} />
          <FaUser size={13} color="#9aa6b4" />
          <FaTshirt size={14} />
          <FaWrench size={13} />
        </SogouItems>
      </SogouBar>
      <ForumTab>
        <FaRegListAlt size={11} />
        论坛提醒
      </ForumTab>
      <OnlineBadge>52</OnlineBadge>
    </Page>
  );
}
